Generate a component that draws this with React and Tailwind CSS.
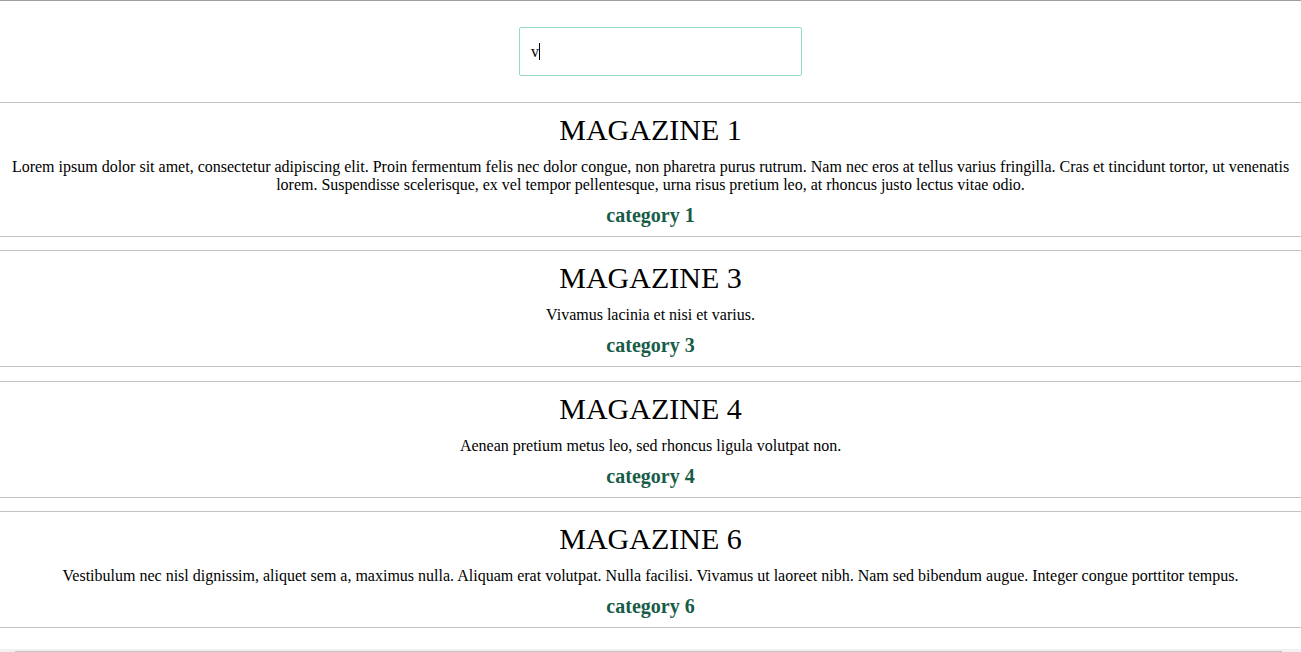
import React from 'react';

const magazines = [
  {
    id: 1,
    title: 'MAGAZINE 1',
    text: 'Lorem ipsum dolor sit amet, consectetur adipiscing elit. Proin fermentum felis nec dolor congue, non pharetra purus rutrum. Nam nec eros at tellus varius fringilla. Cras et tincidunt tortor, ut venenatis lorem. Suspendisse scelerisque, ex vel tempor pellentesque, urna risus pretium leo, at rhoncus justo lectus vitae odio.',
    category: 'category 1',
  },
  { id: 3, title: 'MAGAZINE 3', text: 'Vivamus lacinia et nisi et varius.', category: 'category 3' },
  { id: 4, title: 'MAGAZINE 4', text: 'Aenean pretium metus leo, sed rhoncus ligula volutpat non.', category: 'category 4' },
  {
    id: 6,
    title: 'MAGAZINE 6',
    text: 'Vestibulum nec nisl dignissim, aliquet sem a, maximus nulla. Aliquam erat volutpat. Nulla facilisi. Vivamus ut laoreet nibh. Nam sed bibendum augue. Integer congue porttitor tempus.',
    category: 'category 6',
  },
];

const MagazineCard = ({ title, text, category }) => (
  <div className="border-y border-[#c4c4c4] pt-[10px] pb-[10px] text-center">
    <h1 className="text-[30px] leading-[34px] font-normal">{title}</h1>
    <p className="mt-[11px] text-[16px] leading-[18px]">{text}</p>
    <h3 className="mt-[10px] text-[20px] leading-[22px] font-bold text-[#185c48]">{category}</h3>
  </div>
);

const App = () => {
  return (
    <div className="min-h-screen bg-white text-black font-['Liberation_Serif',serif] border-t border-[#a0a0a0] overflow-hidden">
      <div className="flex justify-center pl-[20px] pt-[26px] pb-[26px]">
        <div className="w-[283px] h-[49px] border border-[#94dcc4] rounded-[2px] flex items-center pl-[11px] text-[16px]">
          <span>v</span>
          <span className="w-px h-[17px] bg-black" />
        </div>
      </div>

      <div className="flex flex-col gap-[13.4px]">
        {magazines.map((m) => (
          <MagazineCard key={m.id} {...m} />
        ))}
      </div>

      <div className="mt-[21px] h-[15px] bg-[#f1f1f1] pt-[2px]">
        <div className="ml-[15px] mr-[19px] h-[11px] bg-[#c1c1c1]" />
      </div>
    </div>
  );
};

export default App;
